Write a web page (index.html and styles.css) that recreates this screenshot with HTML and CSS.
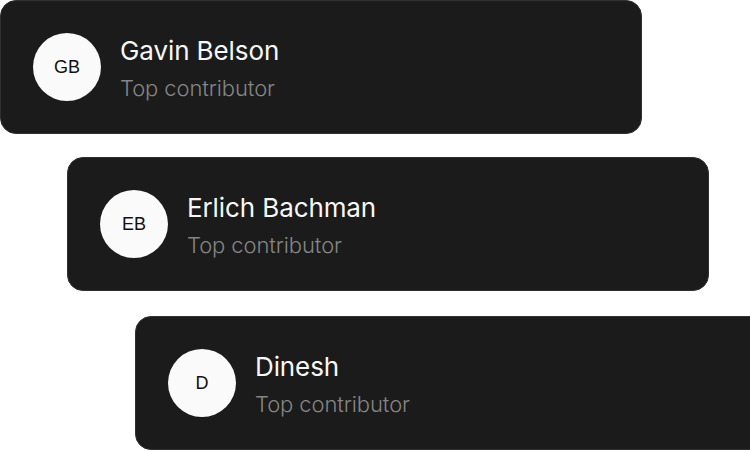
FILE: index.html
```html
<!DOCTYPE html>
<html>
<head>
<meta charset="utf-8">
<link rel="stylesheet" href="styles.css">
</head>
<body>
<div class="stack">
  <div class="card">
    <div class="avatar">GB</div>
    <div class="info">
      <div class="name">Gavin Belson</div>
      <div class="role">Top contributor</div>
    </div>
  </div>
  <div class="card card-2">
    <div class="avatar">EB</div>
    <div class="info">
      <div class="name">Erlich Bachman</div>
      <div class="role">Top contributor</div>
    </div>
  </div>
  <div class="card card-3">
    <div class="avatar">D</div>
    <div class="info">
      <div class="name">Dinesh</div>
      <div class="role">Top contributor</div>
    </div>
  </div>
</div>
</body>
</html>
```

FILE: styles.css
```css
html, body {
  margin: 0;
  padding: 0;
  background: #ffffff;
  width: 750px;
  height: 451px;
  overflow: hidden;
}
.stack {
  display: flex;
  flex-direction: column;
  gap: 23px;
}
.card {
  box-sizing: border-box;
  flex: none;
  width: 642px;
  height: 134px;
  background: #1b1b1b;
  border: 1px solid #303030;
  border-radius: 16px;
  display: flex;
  align-items: center;
  padding-left: 32px;
  gap: 19px;
}
.card-2 { margin-left: 67px; }
.card-3 { margin-left: 135px; margin-top: 2px; }
.avatar {
  flex: none;
  width: 68px;
  height: 68px;
  border-radius: 50%;
  background: #fafafa;
  color: #111;
  display: flex;
  align-items: center;
  justify-content: center;
  font-family: "Liberation Sans", Arial, sans-serif;
  font-size: 18px;
}
.info {
  display: flex;
  flex-direction: column;
  gap: 8px;
  font-family: Inter, "Noto Sans", sans-serif;
  margin-top: 4px;
}
.name {
  color: #f7f7f7;
  font-size: 26px;
  font-weight: 400;
  letter-spacing: -0.1px;
  line-height: 30px;
}
.role {
  color: #858585;
  font-size: 22px;
  font-weight: 300;
  letter-spacing: -0.1px;
  line-height: 28px;
}
```
